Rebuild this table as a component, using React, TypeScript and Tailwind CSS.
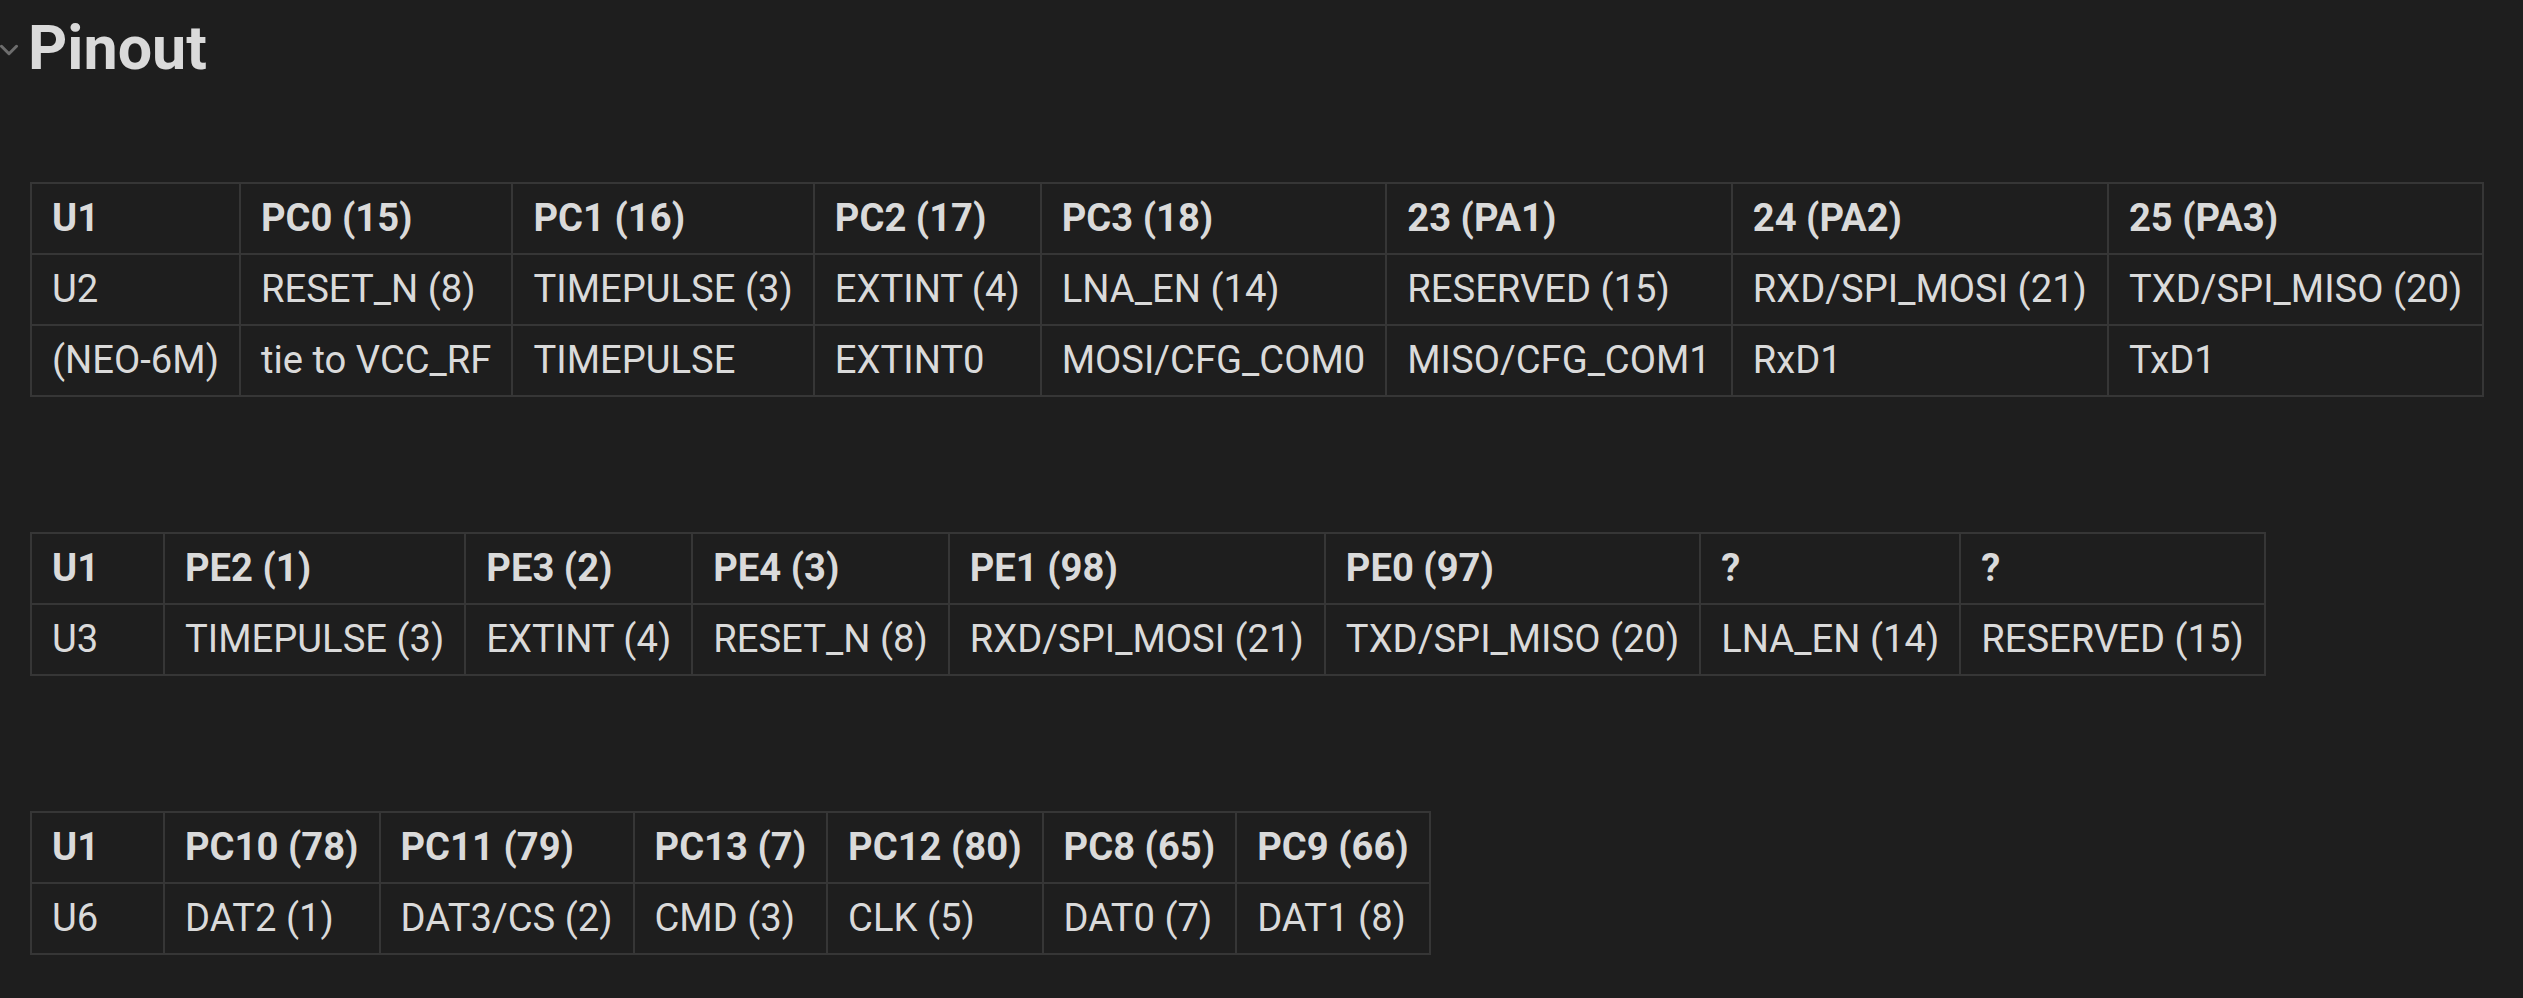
import { ChevronDown } from "lucide-react"

const tables: string[][][] = [
  [
    ["U1", "PC0 (15)", "PC1 (16)", "PC2 (17)", "PC3 (18)", "23 (PA1)", "24 (PA2)", "25 (PA3)"],
    ["U2", "RESET_N (8)", "TIMEPULSE (3)", "EXTINT (4)", "LNA_EN (14)", "RESERVED (15)", "RXD/SPI_MOSI (21)", "TXD/SPI_MISO (20)"],
    ["(NEO-6M)", "tie to VCC_RF", "TIMEPULSE", "EXTINT0", "MOSI/CFG_COM0", "MISO/CFG_COM1", "RxD1", "TxD1"],
  ],
  [
    ["U1", "PE2 (1)", "PE3 (2)", "PE4 (3)", "PE1 (98)", "PE0 (97)", "?", "?"],
    ["U3", "TIMEPULSE (3)", "EXTINT (4)", "RESET_N (8)", "RXD/SPI_MOSI (21)", "TXD/SPI_MISO (20)", "LNA_EN (14)", "RESERVED (15)"],
  ],
  [
    ["U1", "PC10 (78)", "PC11 (79)", "PC13 (7)", "PC12 (80)", "PC8 (65)", "PC9 (66)"],
    ["U6", "DAT2 (1)", "DAT3/CS (2)", "CMD (3)", "CLK (5)", "DAT0 (7)", "DAT1 (8)"],
  ],
]

const PinTable = ({ rows }: { rows: string[][] }) => {
  const [head, ...body] = rows
  return (
    <table className="border-collapse">
      <thead>
        <tr>
          {head.map((cell, i) => (
            <th key={i} className="min-w-[133px] border-2 border-[#363636] px-[20px] pt-[6px] pb-[6px] text-left font-bold leading-[57px] whitespace-nowrap">
              {cell}
            </th>
          ))}
        </tr>
      </thead>
      <tbody>
        {body.map((row, r) => (
          <tr key={r}>
            {row.map((cell, i) => (
              <td key={i} className="border-2 border-[#363636] px-[20px] pt-[6px] pb-[6px] text-left font-normal leading-[57px] whitespace-nowrap">
                {cell}
              </td>
            ))}
          </tr>
        ))}
      </tbody>
    </table>
  )
}

export default function App() {
  return (
    <div className="min-h-screen w-full bg-[#1e1e1e] text-[#dadada] text-[38.2px]" style={{ fontFamily: "Roboto, 'Liberation Sans', sans-serif" }}>
      <div className="pl-[30px] pt-[12px] pb-[40px]">
        <div className="relative flex items-center">
          <ChevronDown className="absolute left-[-36px] top-[23px] text-[#6d6d6d]" size={30} strokeWidth={2.4} />
          <h1 className="text-[61px] font-bold leading-[73px] text-[#dadada] ml-[-2px]">Pinout</h1>
        </div>
        <div className="mt-[97px] flex flex-col gap-[135px] items-start">
          {tables.map((rows, i) => (
            <PinTable key={i} rows={rows} />
          ))}
        </div>
      </div>
    </div>
  )
}
